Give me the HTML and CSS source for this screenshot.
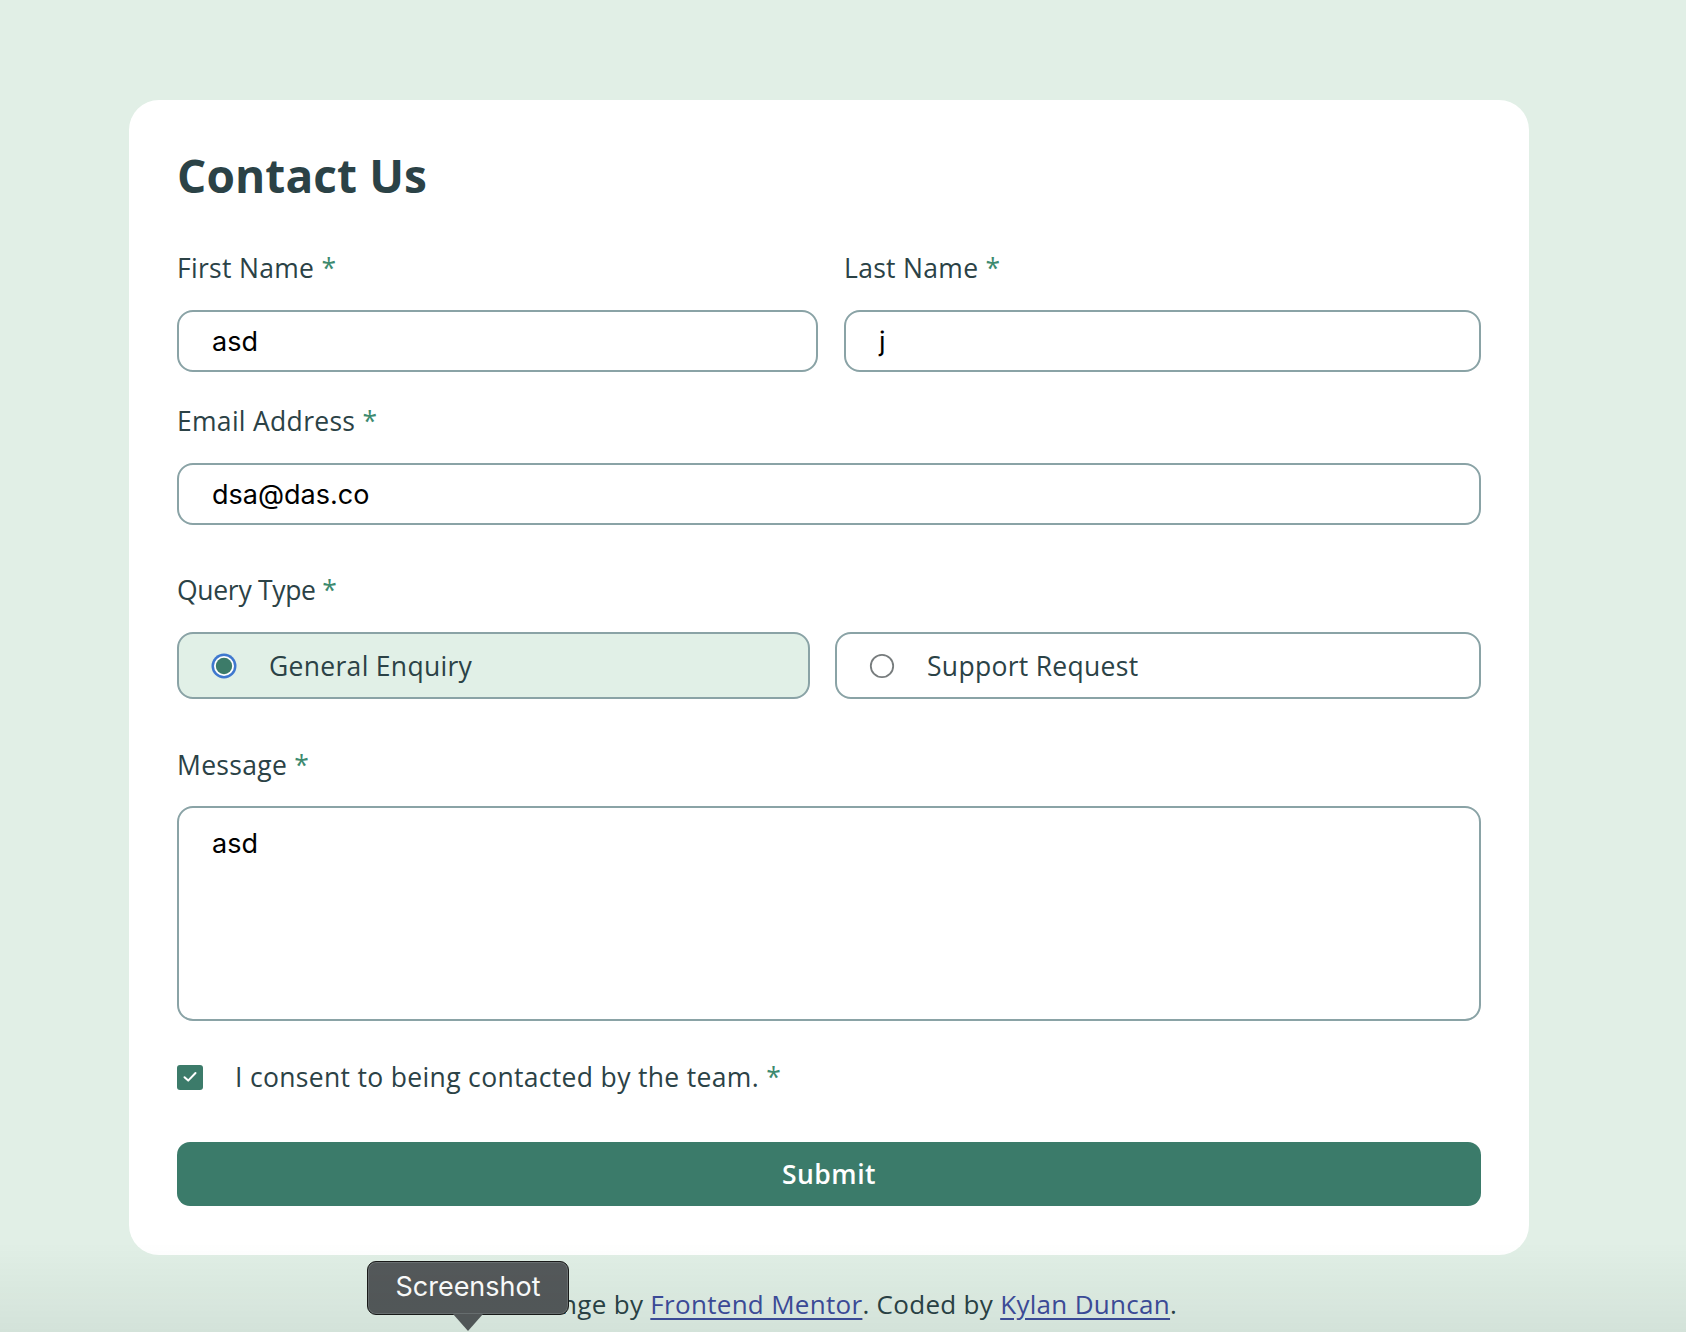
FILE: index.html
```html
<!DOCTYPE html>
<html lang="en">
<head>
<meta charset="utf-8">
<title>Contact Us</title>
<link rel="stylesheet" href="styles.css">
</head>
<body>
<main class="page">
  <form class="card">
    <h1 class="title">Contact Us</h1>

    <div class="row-two">
      <div class="field">
        <label class="label">First Name <span class="req">*</span></label>
        <div class="input">asd</div>
      </div>
      <div class="field">
        <label class="label">Last Name <span class="req">*</span></label>
        <div class="input">j</div>
      </div>
    </div>

    <div class="field field-email">
      <label class="label">Email Address <span class="req">*</span></label>
      <div class="input">dsa@das.co</div>
    </div>

    <fieldset class="query">
      <div class="label label-query">Query Type <span class="req">*</span></div>
      <div class="radio-row">
        <div class="radio-option selected">
          <svg class="radio-dot" width="26" height="26" viewBox="0 0 26 26">
            <circle cx="13" cy="13" r="12.5" fill="#3f78cf"/>
            <circle cx="13" cy="13" r="10" fill="#ffffff"/>
            <circle cx="13" cy="13" r="8.2" fill="#3c7b69"/>
          </svg>
          <span class="radio-text">General Enquiry</span>
        </div>
        <div class="radio-option">
          <svg class="radio-dot" width="26" height="26" viewBox="0 0 26 26">
            <circle cx="13" cy="13" r="11.2" fill="#ffffff" stroke="#777c7d" stroke-width="1.8"/>
          </svg>
          <span class="radio-text">Support Request</span>
        </div>
      </div>
    </fieldset>

    <div class="field field-message">
      <label class="label">Message <span class="req">*</span></label>
      <div class="textarea">asd</div>
    </div>

    <div class="consent">
      <span class="checkbox">
        <svg width="14" height="12" viewBox="0 0 14 12"><path d="M1.5 6.2 L5.2 9.6 L12.5 2" fill="none" stroke="#ffffff" stroke-width="2" stroke-linecap="round" stroke-linejoin="round"/></svg>
      </span>
      <span class="consent-text">I consent to being contacted by the team. <span class="req">*</span></span>
    </div>

    <button class="submit" type="button">Submit</button>
  </form>

  <footer class="attribution">
    Challenge by <a href="#">Frontend Mentor</a>. Coded by <a href="#">Kylan Duncan</a>.
  </footer>

  <div class="tooltip">Screenshot</div>
</main>
<div class="bottom-shade"></div>
</body>
</html>
```

FILE: styles.css
```css
html, body {
  margin: 0;
  padding: 0;
}

body {
  background: #e1efe6;
  font-family: "Open Sans", "Noto Sans", sans-serif;
  color: #2b4246;
  min-height: 1332px;
  overflow: hidden;
}

.page {
  position: relative;
  padding: 100px 0 0 129px;
  min-height: 1232px;
}

.card {
  width: 1400px;
  box-sizing: border-box;
  background: #ffffff;
  border-radius: 30px;
  padding: 47px 48px 49px;
  display: flex;
  flex-direction: column;
}

.title {
  margin: 0 0 47px;
  font-size: 46px;
  line-height: 56px;
  font-weight: 700;
  color: #2b4246;
  letter-spacing: 0.1px;
}

.label {
  display: block;
  font-size: 26.5px;
  line-height: 36px;
  color: #2b4246;
  margin-bottom: 24px;
  letter-spacing: 0.3px;
}

.label-query {
  letter-spacing: -0.3px;
}

.req {
  color: #3d8a6f;
}

.row-two {
  display: grid;
  grid-template-columns: 641fr 637fr;
  column-gap: 26px;
}

.field {
  display: flex;
  flex-direction: column;
}

.field-email {
  margin-top: 31px;
}

.input {
  height: 62px;
  box-sizing: border-box;
  border: 2px solid #8aa3a6;
  border-radius: 16px;
  padding: 0 33px;
  display: flex;
  align-items: center;
  font-family: "Inter", "Liberation Sans", sans-serif;
  font-size: 27px;
  color: #000000;
}

.query {
  border: 0;
  margin: 47px 0 0;
  padding: 0;
}

.radio-row {
  display: grid;
  grid-template-columns: 633fr 646fr;
  column-gap: 25px;
}

.radio-option {
  height: 67px;
  box-sizing: border-box;
  border: 2px solid #8aa3a6;
  border-radius: 16px;
  display: flex;
  align-items: center;
  padding-left: 32px;
  gap: 32px;
  background: #ffffff;
}

.radio-option.selected {
  background: #e1f0e7;
}

.radio-dot {
  flex: none;
  display: block;
}

.radio-text {
  font-size: 26.5px;
  line-height: 36px;
  color: #2b4246;
  letter-spacing: 0.3px;
}

.field-message {
  margin-top: 48px;
}

.field-message .label {
  margin-bottom: 23px;
}

.textarea {
  height: 215px;
  box-sizing: border-box;
  border: 2px solid #8aa3a6;
  border-radius: 16px;
  padding: 18px 33px;
  font-family: "Inter", "Liberation Sans", sans-serif;
  font-size: 27px;
  line-height: 36px;
  color: #000000;
}

.consent {
  margin-top: 38px;
  display: flex;
  align-items: center;
  gap: 32px;
}

.checkbox {
  width: 26px;
  height: 25px;
  border-radius: 3px;
  background: #3c7b6a;
  display: flex;
  align-items: center;
  justify-content: center;
  flex: none;
}

.checkbox svg {
  display: block;
}

.consent-text {
  font-size: 26.5px;
  line-height: 36px;
  color: #2b4246;
  letter-spacing: 0.33px;
}

.submit {
  margin-top: 47px;
  height: 64px;
  border: 0;
  border-radius: 13px;
  background: #3b7b6a;
  color: #ffffff;
  font-family: "Open Sans", "Noto Sans", sans-serif;
  font-size: 26.5px;
  font-weight: 600;
  letter-spacing: 0.5px;
  width: 100%;
  padding: 0;
}

.attribution {
  margin-top: 31px;
  margin-left: -129px;
  padding-right: 24px;
  text-align: center;
  font-size: 26px;
  line-height: 36px;
  color: #2b4246;
  letter-spacing: 0.3px;
}

.attribution a {
  color: #3e4c9c;
  text-decoration: underline;
  text-underline-offset: 4px;
}

.tooltip {
  position: absolute;
  left: 367px;
  top: 1261px;
  width: 202px;
  height: 54px;
  box-sizing: border-box;
  background: #55595b;
  border: 1.5px solid #1a1a1a;
  border-radius: 9px;
  box-shadow: inset 0 0 0 1px #6c7173;
  color: #ffffff;
  font-family: "Inter", "Liberation Sans", sans-serif;
  font-size: 27px;
  line-height: 50px;
  text-align: center;
}

.tooltip::after {
  content: "";
  position: absolute;
  left: 50%;
  bottom: -17px;
  margin-left: -15px;
  width: 0;
  height: 0;
  border-left: 15px solid transparent;
  border-right: 15px solid transparent;
  border-top: 17px solid #55595b;
}

.bottom-shade {
  position: fixed;
  left: 0;
  right: 0;
  bottom: 0;
  height: 90px;
  background: linear-gradient(to bottom, rgba(0, 40, 20, 0) 0%, rgba(0, 40, 20, 0.06) 100%);
  pointer-events: none;
}
```
